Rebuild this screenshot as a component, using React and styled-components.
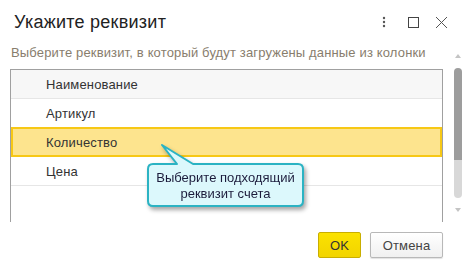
import React from "react";
import styled, { createGlobalStyle } from "styled-components";

const Global = createGlobalStyle`
  html, body { margin: 0; padding: 0; background: #fff; }
  body { font-family: Arial, "Liberation Sans", sans-serif; }
  * { box-sizing: border-box; }
`;

const Dialog = styled.div`
  width: 462px;
  height: 271px;
  position: relative;
  overflow: hidden;
  background: #fff;
  font-family: Arial, "Liberation Sans", sans-serif;
`;

const TitleBar = styled.div`
  display: flex;
  align-items: flex-start;
  justify-content: space-between;
  padding: 11px 14px 0 14px;
  height: 45px;
`;

const Title = styled.div`
  font-size: 18px;
  line-height: 22px;
  letter-spacing: 0.25px;
  color: #222;
`;

const Tools = styled.div`
  display: flex;
  align-items: center;
  margin-top: 4px;
`;

const ToolBtn = styled.div`
  width: ${(p) => p.$w}px;
  height: 14px;
  display: flex;
  align-items: center;
  justify-content: center;
  margin-left: ${(p) => p.$ml || 0}px;
`;

const Hint = styled.div`
  font-size: 13px;
  line-height: 16px;
  letter-spacing: 0.15px;
  color: #887d6d;
  padding-left: 11px;
  white-space: nowrap;
`;

const ListArea = styled.div`
  display: flex;
  margin-top: 8px;
  height: 153px;
`;

const Table = styled.div`
  position: relative;
  margin-left: 10px;
  width: 433px;
  border: 1px solid #a0a0a0;
  border-bottom: none;
`;

const Row = styled.div`
  height: 29px;
  display: flex;
  align-items: center;
  padding-left: 35px;
  font-size: 13px;
  letter-spacing: 0.15px;
  color: #333;
  border-bottom: 1px solid #e6e6e6;
  background: ${(p) => (p.$header ? "#f7f7f7" : "#fff")};
  ${(p) =>
    p.$selected &&
    `
    background: #fde48e;
    border: 2px solid #f7c815;
    margin-top: -1px;
    height: 30px;
    padding-left: 33px;
  `}
`;

const ScrollColumn = styled.div`
  margin-left: 11px;
  margin-top: -15px;
  width: 8px;
  display: flex;
  flex-direction: column;
  align-items: center;
`;

const Arrow = styled.div`
  width: 0;
  height: 0;
  border-left: 3px solid transparent;
  border-right: 3px solid transparent;
  ${(p) =>
    p.$up
      ? "border-bottom: 4px solid #c4c4c4;"
      : "border-top: 4px solid #c4c4c4;"}
  margin-top: ${(p) => p.$mt}px;
`;

const Thumb = styled.div`
  width: 8px;
  height: 92px;
  margin-top: 10px;
  background: #9d9d9d;
  border-radius: 4px 4px 0 0;
`;

const Track = styled.div`
  width: 8px;
  height: 38px;
  background: #d8d8d8;
  border-radius: 0 0 4px 4px;
`;

const Footer = styled.div`
  display: flex;
  justify-content: flex-end;
  gap: 9px;
  padding-right: 19px;
  margin-top: 10px;
`;

const Button = styled.button`
  height: 26px;
  width: ${(p) => p.$w}px;
  font-family: Arial, "Liberation Sans", sans-serif;
  font-size: 13px;
  letter-spacing: 0.15px;
  padding: 0;
  border-radius: 2px;
  cursor: pointer;
  color: ${(p) => (p.$primary ? "#333" : "#444")};
  border: 1px solid ${(p) => (p.$primary ? "#c9ae00" : "#b8b8b8")};
  background: ${(p) =>
    p.$primary
      ? "linear-gradient(#fbe200, #f2d400)"
      : "linear-gradient(#ffffff, #f0f0f0)"};
  box-shadow: ${(p) =>
    p.$primary ? "none" : "0 1px 1px rgba(0,0,0,0.12)"};
`;

const Callout = styled.div`
  position: absolute;
  left: 135px;
  top: 73px;
  width: 165px;
  height: 70px;
  filter: drop-shadow(2px 3px 2px rgba(0, 0, 0, 0.35));
`;

const CalloutText = styled.div`
  position: absolute;
  left: 2px;
  top: 21px;
  width: 155px;
  height: 42px;
  display: flex;
  flex-direction: column;
  align-items: center;
  justify-content: center;
  font-size: 13px;
  line-height: 16px;
  color: #1c1c3c;
  text-align: center;
  padding-top: 1px;
`;

function Kebab() {
  return (
    <svg width="4" height="12" viewBox="0 0 4 12">
      <circle cx="2" cy="2" r="1.2" fill="#555" />
      <circle cx="2" cy="6" r="1.2" fill="#555" />
      <circle cx="2" cy="10" r="1.2" fill="#555" />
    </svg>
  );
}

function Square() {
  return (
    <svg width="11" height="11" viewBox="0 0 11 11">
      <rect x="0.5" y="0.5" width="10" height="10" fill="none" stroke="#444" strokeWidth="1" />
    </svg>
  );
}

function Close() {
  return (
    <svg width="13" height="13" viewBox="0 0 13 13">
      <path d="M1 1 L12 12 M12 1 L1 12" stroke="#555" strokeWidth="1" fill="none" />
    </svg>
  );
}

export default function App() {
  return (
    <>
      <Global />
      <Dialog>
        <TitleBar>
          <Title>Укажите реквизит</Title>
          <Tools>
            <ToolBtn $w={6}>
              <Kebab />
            </ToolBtn>
            <ToolBtn $w={11} $ml={21}>
              <Square />
            </ToolBtn>
            <ToolBtn $w={13} $ml={16}>
              <Close />
            </ToolBtn>
          </Tools>
        </TitleBar>
        <Hint>Выберите реквизит, в который будут загружены данные из колонки</Hint>
        <ListArea>
          <Table>
            <Row $header>Наименование</Row>
            <Row>Артикул</Row>
            <Row $selected>Количество</Row>
            <Row>Цена</Row>
            <Callout>
              <svg width="165" height="70" viewBox="0 0 165 70">
                <path
                  d="M 7 21 H 31 L 16 2 L 47 21 H 152 Q 157 21 157 26 V 58 Q 157 63 152 63 H 7 Q 2 63 2 58 V 26 Q 2 21 7 21 Z"
                  fill="#dcf8fc"
                  stroke="#2bb3c3"
                  strokeWidth="2"
                  strokeLinejoin="round"
                />
              </svg>
              <CalloutText>
                <span>Выберите подходящий</span>
                <span>реквизит счета</span>
              </CalloutText>
            </Callout>
          </Table>
          <ScrollColumn>
            <Arrow $up $mt={0} />
            <Thumb />
            <Track />
            <Arrow $mt={10} />
          </ScrollColumn>
        </ListArea>
        <Footer>
          <Button $primary $w={43}>OK</Button>
          <Button $w={73}>Отмена</Button>
        </Footer>
      </Dialog>
    </>
  );
}
